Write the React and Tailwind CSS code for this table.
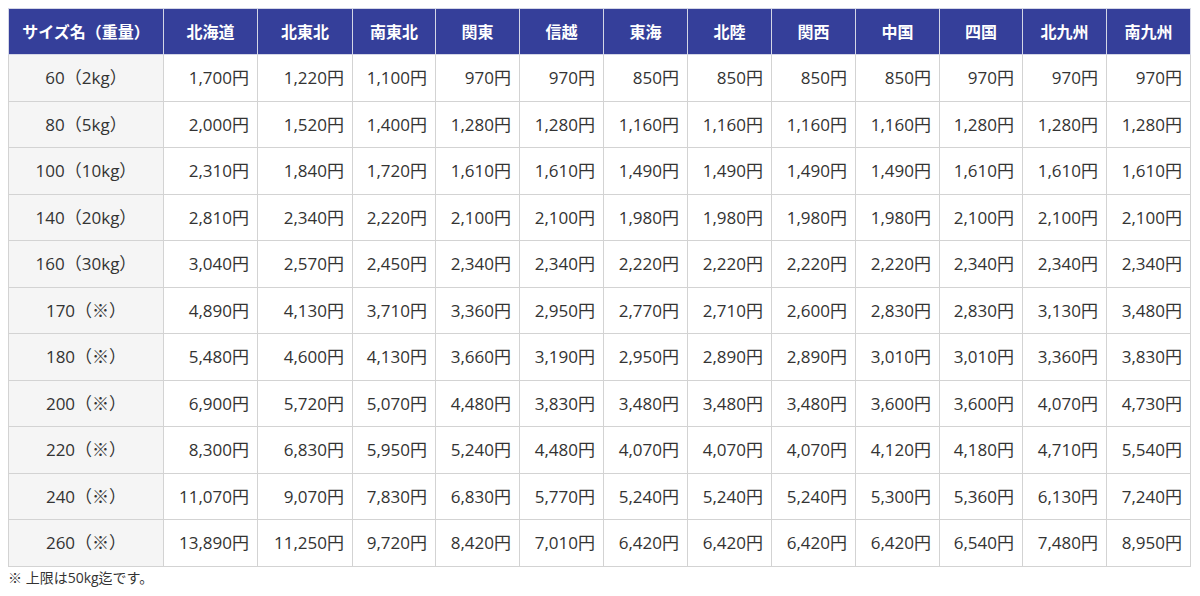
const regions = ['北海道', '北東北', '南東北', '関東', '信越', '東海', '北陸', '関西', '中国', '四国', '北九州', '南九州'];

const widths = [94, 95, 83, 84, 84, 84, 84, 84, 84, 83, 84, 84];

const rows = [
  ['60（2kg）', '1,700', '1,220', '1,100', '970', '970', '850', '850', '850', '850', '970', '970', '970'],
  ['80（5kg）', '2,000', '1,520', '1,400', '1,280', '1,280', '1,160', '1,160', '1,160', '1,160', '1,280', '1,280', '1,280'],
  ['100（10kg）', '2,310', '1,840', '1,720', '1,610', '1,610', '1,490', '1,490', '1,490', '1,490', '1,610', '1,610', '1,610'],
  ['140（20kg）', '2,810', '2,340', '2,220', '2,100', '2,100', '1,980', '1,980', '1,980', '1,980', '2,100', '2,100', '2,100'],
  ['160（30kg）', '3,040', '2,570', '2,450', '2,340', '2,340', '2,220', '2,220', '2,220', '2,220', '2,340', '2,340', '2,340'],
  ['170（※）', '4,890', '4,130', '3,710', '3,360', '2,950', '2,770', '2,710', '2,600', '2,830', '2,830', '3,130', '3,480'],
  ['180（※）', '5,480', '4,600', '4,130', '3,660', '3,190', '2,950', '2,890', '2,890', '3,010', '3,010', '3,360', '3,830'],
  ['200（※）', '6,900', '5,720', '5,070', '4,480', '3,830', '3,480', '3,480', '3,480', '3,600', '3,600', '4,070', '4,730'],
  ['220（※）', '8,300', '6,830', '5,950', '5,240', '4,480', '4,070', '4,070', '4,070', '4,120', '4,180', '4,710', '5,540'],
  ['240（※）', '11,070', '9,070', '7,830', '6,830', '5,770', '5,240', '5,240', '5,240', '5,300', '5,360', '6,130', '7,240'],
  ['260（※）', '13,890', '11,250', '9,720', '8,420', '7,010', '6,420', '6,420', '6,420', '6,420', '6,540', '7,480', '8,950'],
];

export default function App() {
  return (
    <div
      className="w-[1200px] h-[596px] bg-white pt-2 pl-2 text-[#333]"
      style={{ fontFamily: '"Open Sans", "Noto Sans CJK JP", sans-serif' }}
    >
      <table className="border-collapse table-fixed w-[1182px]">
        <colgroup>
          <col className="w-[155px]" />
          {widths.map((w, i) => (
            <col key={i} style={{ width: w }} />
          ))}
        </colgroup>
        <thead>
          <tr className="h-[46px]">
            <th className="bg-[#353f9a] text-white font-bold text-[16px] border border-[#d4d6e6] text-center whitespace-nowrap">
              サイズ名（重量）
            </th>
            {regions.map((r) => (
              <th
                key={r}
                className="bg-[#353f9a] text-white font-bold text-[16px] border border-[#d4d6e6] text-center"
              >
                {r}
              </th>
            ))}
          </tr>
        </thead>
        <tbody>
          {rows.map((row, ri) => (
            <tr key={ri} className="h-[46.5px]">
              <td className="bg-[#f5f5f5] border border-[#d3d3d3] text-center text-[17px] whitespace-nowrap">{row[0]}</td>
              {row.slice(1).map((v, ci) => (
                <td key={ci} className="border border-[#d3d3d3] text-right pr-[8px] text-[17px] whitespace-nowrap">
                  {v}円
                </td>
              ))}
            </tr>
          ))}
        </tbody>
      </table>
      <p className="text-[14px] mt-[1px] leading-[20px]">※ 上限は50kg迄です。</p>
    </div>
  );
}
